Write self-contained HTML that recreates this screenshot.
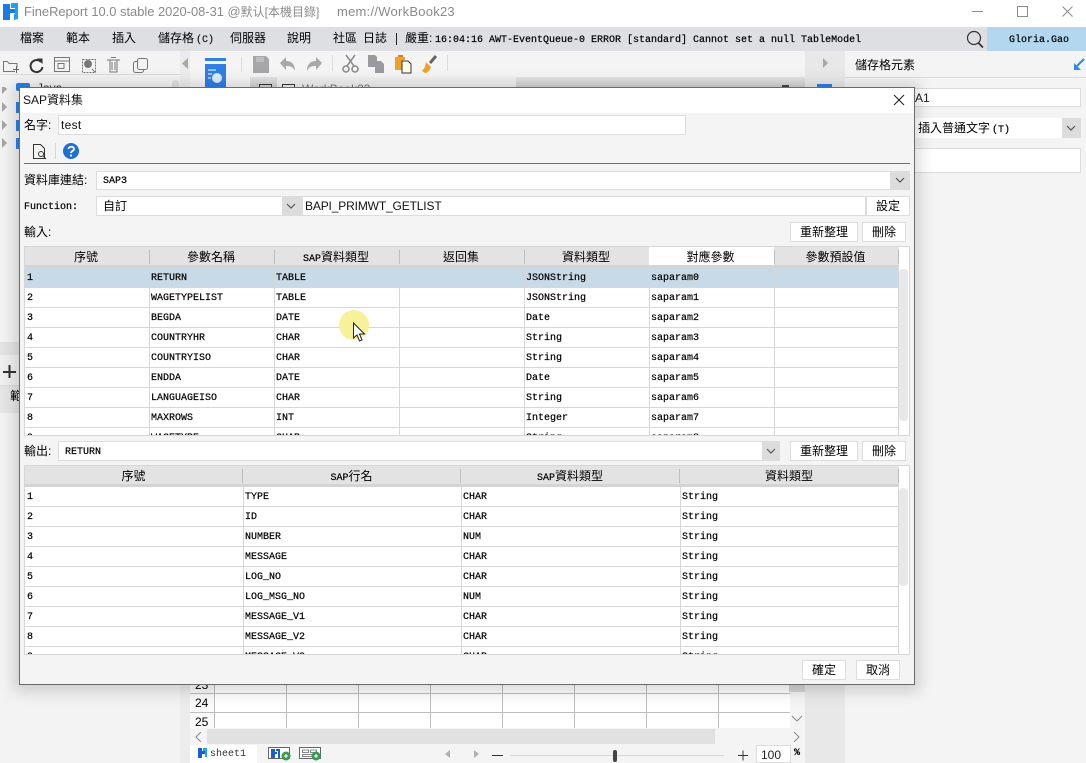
<!DOCTYPE html>
<html><head><meta charset="utf-8">
<style>
html,body{margin:0;padding:0;width:1086px;height:763px;overflow:hidden;background:#f3f3f3}
body{position:relative;font-family:"Liberation Sans","Noto Sans CJK TC",sans-serif;font-size:12px;color:#000}
.a{position:absolute;box-sizing:border-box}
.t{position:absolute;white-space:nowrap;line-height:16px}
.m{font-family:"Liberation Mono","Noto Sans CJK TC",monospace;font-size:10px;-webkit-text-stroke:.2px #000}
.in{position:absolute;box-sizing:border-box;background:#fff;border:1px solid #dcdcdc}
.btn{position:absolute;box-sizing:border-box;background:#fff;border:1px solid #dcdcdc;text-align:center;font-size:12px;line-height:18px}
.arr{position:absolute;box-sizing:border-box;background:#dcdcdc}
.hd{position:absolute;background:#e3e3e3;border-bottom:3px solid #d4d4d4;box-sizing:border-box;display:flex}
.hd div{box-sizing:border-box;text-align:center;line-height:18px;font-size:12px;border-right:1px solid #bdbdbd;height:14px;margin-top:3px;}
.hd div span{position:relative;top:-2px;left:-1px}
.hd.b div span{left:0}
table{border-collapse:separate;border-spacing:0;table-layout:fixed;font-family:"Liberation Mono",monospace;font-size:10px;background:#fff;-webkit-text-stroke:.2px #000}
td{height:20px;padding:2px 0 0 1px;border:0;border-right:1px solid #d6d6d6;border-bottom:1px solid #d6d6d6;white-space:nowrap;overflow:hidden;box-sizing:border-box;line-height:17px;vertical-align:top}
td:first-child{padding-left:2px}
tr.s td{background:#c8dae8}
.clip{position:absolute;overflow:hidden;background:#fff}
</style></head>
<body>
<!-- title bar -->
<div class="a" style="left:0;top:0;width:1086px;height:27px;background:#fff"></div>
<svg class="a" style="left:3px;top:3px" width="16" height="17" viewBox="0 0 16 17"><path d="M0 1h7v5h5v4H7v7H0z" fill="#1a7be0"/><path d="M8 0h7v16l-4 1V11h1V5H8z" fill="#1aa3f0"/></svg>
<div class="t" style="left:24px;top:4px;color:#8a8a8a;font-size:12.9px">FineReport 10.0 stable 2020-08-31 @<span style="font-size:12px">默认[本機目錄]</span></div>
<div class="t" style="left:337px;top:4px;color:#8a8a8a;font-size:13px;letter-spacing:.25px">mem://WorkBook23</div>
<div class="a" style="left:972px;top:11px;width:11px;height:1px;background:#8c8c8c"></div>
<div class="a" style="left:1017px;top:6px;width:11px;height:11px;border:1px solid #8c8c8c"></div>
<svg class="a" style="left:1062px;top:6px" width="12" height="12"><path d="M.5.5l10 10M10.500.5l-10 10" stroke="#8c8c8c" fill="none"/></svg>
<!-- menu -->
<div class="a" style="left:0;top:27px;width:1086px;height:24px;background:#dedfe2"></div>
<div class="t" style="left:20px;top:30px">檔案</div>
<div class="t" style="left:66px;top:30px">範本</div>
<div class="t" style="left:112px;top:30px">插入</div>
<div class="t" style="left:158px;top:30px">儲存格<span class="m" style="margin-left:2px;color:#223">(C)</span></div>
<div class="t" style="left:230px;top:30px">伺服器</div>
<div class="t" style="left:287px;top:30px">說明</div>
<div class="t" style="left:333px;top:30px">社區</div>
<div class="t" style="left:363px;top:30px">日誌</div>
<div class="a" style="left:396px;top:33px;width:1px;height:12px;background:#222"></div>
<div class="t" style="left:405px;top:30px">嚴重:</div>
<div class="t m" style="left:435px;top:33px">16:04:16 AWT-EventQueue-0 ERROR [standard] Cannot set a null TableModel</div>
<svg class="a" style="left:966px;top:29px" width="19" height="20" viewBox="0 0 19 20"><circle cx="8" cy="9" r="6.500" fill="none" stroke="#333" stroke-width="1.200"/><path d="M12.500 14l4.500 4.500" stroke="#333" stroke-width="1.800"/></svg>
<div class="a" style="left:987px;top:27px;width:99px;height:24px;background:#b3d7ef"></div>
<div class="t m" style="left:1009px;top:33px">Gloria.Gao</div>
<!-- left panel + toolbar -->
<div class="a" style="left:0;top:51px;width:180px;height:712px;background:#f3f3f3"></div>
<div class="a" style="left:0;top:74px;width:180px;height:1px;background:#dcdcdc"></div>
<div class="a" style="left:16px;top:83px;width:14px;height:8px;background:#2f7fe4;border-radius:2px"></div>
<div class="t" style="left:37px;top:80px;color:#333">Java</div>
<div class="a" style="left:172px;top:80px;width:7px;height:12px;background:#e0e0e0;border-radius:3px"></div>
<div class="a" style="left:0;top:342px;width:19px;height:13px;background:#e4e4e4"></div>
<div class="a" style="left:0;top:355px;width:19px;height:31px;background:#f0f0f0;border-bottom:1px solid #dcdcdc"></div>
<div class="a" style="left:0;top:386px;width:19px;height:27px;background:#e6e6e6"></div>
<div class="t" style="left:10px;top:388px">範</div>
<svg class="a" style="left:3px;top:365px" width="14" height="14"><path d="M0 7h13M6.500 0v13" stroke="#333" stroke-width="2"/></svg>
<svg class="a" style="left:0;top:55px" width="150" height="22" fill="none" stroke="#777">
<path d="M15 16.500H3.500V6.500h4l1.500 2h8v4" /><path d="M16.500 11v7M13 14.500h6" stroke="#666"/>
<path d="M41 7a6 6 0 1 0 1.500 5" stroke="#333" stroke-width="2"/><path d="M37 3.500l5.500 0 0 5.500z" fill="#333" stroke="none"/>
<rect x="54.500" y="2.500" width="15" height="14"/><path d="M55 6h14M58 8.500h6v5h-6z"/>
<path d="M82.500 4.500h13v13h-13z" stroke-dasharray="2 1"/><circle cx="88" cy="9" r="3.500" fill="#777"/><path d="M92 14l3 3"/>
<path d="M107 5h13M110 5v12h7V5M111 2.500h5M112 7v8M115 7v8"/>
<rect x="133.500" y="6.500" width="10" height="11" rx="2"/><rect x="137.500" y="3.500" width="10" height="11" rx="2" fill="#f3f3f3"/>
</svg>
<svg class="a" style="left:0;top:87px" width="19" height="70"><path d="M2 -3l5 5-5 5zM2 15l5 5-5 5zM2 33l5 5-5 5zM2 51l5 5-5 5z" fill="#a5a5a5"/><path d="M16 15h3v11h-3zM16 33h3v11h-3zM16 51h3v11h-3z" fill="#2f7fe4"/></svg>
<div class="a" style="left:180px;top:51px;width:10px;height:712px;background:#ececec"></div>
<svg class="a" style="left:182px;top:58px" width="7" height="12"><path d="M6 0v11L0 5.500z" fill="#a8a8a8"/></svg>
<!-- workbook area -->
<div class="a" style="left:190px;top:51px;width:615px;height:712px;background:#f4f4f4"></div>
<svg class="a" style="left:202px;top:57px" width="26" height="32"><rect x="3" y="1" width="21" height="3" fill="#2f7fe4"/><path d="M3 7h21v25H3z" fill="#2f7fe4"/><circle cx="15" cy="21" r="5" fill="#d9ecff"/><path d="M6 13h8M6 17h4M6 21h3" stroke="#fff"/></svg>
<div class="a" style="left:241px;top:57px;width:1px;height:15px;background:#dcdcdc"></div>
<svg class="a" style="left:250px;top:54px" width="190" height="20">
<path d="M3 2h13l3 3v14H3z" fill="#a6a6a8"/><path d="M6 3h8v5H6z" fill="#bdbdbf"/>
<path d="M30 9l6-6v4c7 0 9 5 9 10-2-4-4-5-9-5v4z" fill="#a8a8aa"/>
<path d="M72 9l-6-6v4c-7 0-9 5-9 10 2-4 4-5 9-5v4z" fill="#a8a8aa"/>
<g stroke="#8d8d90" stroke-width="1.600" fill="none"><circle cx="96" cy="15" r="3"/><circle cx="105" cy="15" r="3"/><path d="M97 12L105 1M104 12L96 1"/></g>
<path d="M118 1h7l2 2v4h4l3 3v9h-9v-6h-7z" fill="#9a9a9e"/>
<path d="M145 3h10v3h-2v10h-8z" fill="#eba22a"/><path d="M148 1h5v2h-5z" fill="#e07c20"/><path d="M152 7h6l3 3v9h-9z" fill="#fffde8" stroke="#333"/>
<path d="M176 8l5 5c-1 3-3 5-5 6-1 0-3-1-4-3 1 0 3-1 4-8z" fill="#eba22a"/><path d="M180 9l6-7" stroke="#666" stroke-width="3"/>
</svg>
<div class="a" style="left:447px;top:55px;width:1px;height:16px;background:#dcdcdc"></div>
<div class="a" style="left:332px;top:55px;width:1px;height:16px;background:#dcdcdc"></div>
<div class="a" style="left:250px;top:77px;width:555px;height:11px;background:linear-gradient(#e4e4e4,#cfcfcf)"></div>
<div class="a" style="left:277px;top:77px;width:239px;height:11px;background:#f0f0f0"></div>
<div class="a" style="left:259px;top:84px;width:13px;height:4px;border:1px solid #333;border-bottom:0"></div>
<div class="a" style="left:282px;top:84px;width:13px;height:4px;border:1px solid #333;border-bottom:0"></div>
<div class="t" style="left:302px;top:81px;color:#777">WorkBook23</div>
<div class="a" style="left:782px;top:85px;width:7px;height:3px;background:#444"></div>
<!-- sheet grid -->
<div class="a" style="left:190px;top:684px;width:25px;height:45px;background:#fafafa"></div>
<div class="a" style="left:215px;top:684px;width:575px;height:45px;background:#fff"></div>
<div class="a" style="left:190px;top:693px;width:600px;height:1px;background:#bdbdbd"></div>
<div class="a" style="left:190px;top:712px;width:600px;height:1px;background:#bdbdbd"></div>
<div class="a" style="left:214px;top:684px;width:1px;height:45px;background:#bdbdbd"></div>
<div class="a" style="left:286px;top:684px;width:1px;height:45px;background:#bdbdbd"></div>
<div class="a" style="left:358px;top:684px;width:1px;height:45px;background:#bdbdbd"></div>
<div class="a" style="left:430px;top:684px;width:1px;height:45px;background:#bdbdbd"></div>
<div class="a" style="left:502px;top:684px;width:1px;height:45px;background:#bdbdbd"></div>
<div class="a" style="left:574px;top:684px;width:1px;height:45px;background:#bdbdbd"></div>
<div class="a" style="left:646px;top:684px;width:1px;height:45px;background:#bdbdbd"></div>
<div class="a" style="left:718px;top:684px;width:1px;height:45px;background:#bdbdbd"></div>
<div class="t" style="left:195px;top:677px">23</div>
<div class="t" style="left:195px;top:695px">24</div>
<div class="t" style="left:195px;top:714px">25</div>
<div class="a" style="left:789px;top:684px;width:16px;height:8px;background:#d4d4d4"></div>
<svg class="a" style="left:791px;top:715px" width="12" height="8"><path d="M1 1l5 5 5-5" stroke="#888" fill="none"/></svg>
<div class="a" style="left:190px;top:728px;width:615px;height:16px;background:#f4f4f4"></div>
<div class="a" style="left:207px;top:729px;width:508px;height:15px;background:#e1e1e1"></div>
<svg class="a" style="left:195px;top:732px" width="8" height="10"><path d="M6 0L1 5l5 5" stroke="#888" fill="none"/></svg>
<svg class="a" style="left:793px;top:732px" width="8" height="10"><path d="M1 0l5 5-5 5" stroke="#888" fill="none"/></svg>
<div class="a" style="left:190px;top:745px;width:67px;height:18px;background:#fff"></div>
<svg class="a" style="left:198px;top:748px" width="9" height="10"><path d="M0 0h4v3h3v3H4v4H0z" fill="#1a5fd0"/><path d="M5 0h4v9H7V3H5z" fill="#1aa3f0"/></svg>
<div class="t m" style="left:210px;top:747px;color:#333;-webkit-text-stroke:0">sheet1</div>
<svg class="a" style="left:268px;top:746px" width="60" height="16"><rect x=".5" y="1.500" width="21" height="11" fill="#fff" stroke="#666"/><path d="M3 3h4v3h2v2H7v4H3zM8 3h4v9h-2V5H8z" fill="#1a5fd0"/><circle cx="18" cy="10" r="4.500" fill="#3a9a55"/><path d="M16 10h4M18 8v4" stroke="#fff"/>
<rect x="31.500" y="1.500" width="21" height="11" fill="#fff" stroke="#666"/><path d="M34.500 4h6v2.500h-6zM42.500 4h6v2.500h-6zM34.500 8.500h14v2h-14z" fill="none" stroke="#666" stroke-width=".8"/><circle cx="48" cy="10" r="4.500" fill="#3a9a55"/><path d="M46 10h4M48 8v4" stroke="#fff"/></svg>
<svg class="a" style="left:444px;top:750px" width="50" height="9"><path d="M6 0v8L1 4zM30 0v8l5-4z" fill="#b0b0b0"/></svg>
<div class="a" style="left:492px;top:755px;width:11px;height:1px;background:#333"></div>
<div class="a" style="left:510px;top:755px;width:214px;height:1px;background:#d6d6d6"></div>
<div class="a" style="left:613px;top:750px;width:4px;height:12px;background:#444;border-radius:2px"></div>
<svg class="a" style="left:738px;top:750px" width="11" height="11"><path d="M0 5.500h10M5 .5v10" stroke="#333"/></svg>
<div class="a" style="left:756px;top:745px;width:35px;height:18px;background:#fff;border:1px solid #dcdcdc"></div>
<div class="t" style="left:761px;top:747px;color:#222">100</div>
<div class="t m" style="left:794px;top:746px;font-weight:bold">%</div>
<!-- right strip + panel -->
<div class="a" style="left:805px;top:51px;width:40px;height:712px;background:#e8e8e8"></div>
<svg class="a" style="left:823px;top:58px" width="6" height="11"><path d="M0 0v10l5-5z" fill="#a8a8a8"/></svg>
<div class="a" style="left:817px;top:84px;width:15px;height:4px;background:#2f7fe4"></div>
<div class="a" style="left:845px;top:51px;width:241px;height:712px;background:#f4f4f4"></div>
<div class="a" style="left:845px;top:77px;width:241px;height:1px;background:#dcdcdc"></div>
<div class="t" style="left:855px;top:57px">儲存格元素</div>
<svg class="a" style="left:1073px;top:58px" width="12" height="13"><path d="M11 1L3 9" stroke="#2f8be0" stroke-width="2"/><path d="M1 5v7h7z" fill="#2f8be0"/></svg>
<div class="in" style="left:880px;top:88px;width:201px;height:19px"></div>
<div class="t" style="left:915px;top:90px;color:#222">A1</div>
<div class="in" style="left:880px;top:118px;width:201px;height:20px;background:#fff;border:0"></div>
<div class="arr" style="left:1062px;top:118px;width:19px;height:20px"></div>
<svg class="a" style="left:1066px;top:125px" width="11" height="7"><path d="M1 1l4 4 4-4" stroke="#555" fill="none" stroke-width="1.200"/></svg>
<div class="t" style="left:918px;top:120px">插入普通文字<span class="m" style="margin-left:2px">(T)</span></div>
<div class="in" style="left:880px;top:148px;width:201px;height:25px"></div>
<!-- dialog -->
<div class="a" style="left:19px;top:87px;width:896px;height:598px;background:#f4f4f4;border:1px solid #6b6b6b;box-shadow:0 2px 14px 5px rgba(0,0,0,.15)">
</div>
<div class="a" style="left:20px;top:88px;width:894px;height:25px;background:#fff"></div>
<div class="t" style="left:23px;top:92px;color:#111">SAP資料集</div>
<svg class="a" style="left:893px;top:94px" width="12" height="12"><path d="M1 1l10 10M11 1L1 11" stroke="#222" stroke-width="1.100" fill="none"/></svg>

<div class="t" style="left:24px;top:117px">名字:</div>
<div class="in" style="left:58px;top:115px;width:628px;height:20px"></div>
<div class="t" style="left:61px;top:117px;color:#111;letter-spacing:.3px">test</div>

<svg class="a" style="left:32px;top:143px" width="16" height="18" fill="none" stroke="#333"><path d="M1.500 1.500h7l4 4v10h-11z"/><circle cx="9" cy="11" r="2.500"/><path d="M11 13l3 3"/></svg>
<div class="a" style="left:55px;top:143px;width:1px;height:16px;background:#d6d6d6"></div>
<svg class="a" style="left:63px;top:143px" width="16" height="16"><circle cx="8" cy="8" r="8" fill="#2070d0"/><path d="M5.500 6c0-3 5.500-3 5.500 0 0 2-3 2-3 4" stroke="#fff" stroke-width="1.800" fill="none"/><circle cx="8" cy="12.500" r="1.100" fill="#fff"/></svg>
<div class="a" style="left:24px;top:163px;width:886px;height:1px;background:#6e6e6e"></div>

<div class="t" style="left:24px;top:172px">資料庫連結:</div>
<div class="in" style="left:96px;top:171px;width:814px;height:19px"></div>
<div class="arr" style="left:890px;top:171px;width:20px;height:19px"></div>
<svg class="a" style="left:895px;top:177px" width="11" height="7"><path d="M1 1l4 4 4-4" stroke="#555" fill="none" stroke-width="1.200"/></svg>
<div class="t m" style="left:103px;top:174px">SAP3</div>

<div class="t m" style="left:24px;top:200px">Function:</div>
<div class="in" style="left:96px;top:196px;width:206px;height:20px"></div>
<div class="t" style="left:103px;top:198px">自訂</div>
<div class="arr" style="left:282px;top:197px;width:20px;height:18px"></div>
<svg class="a" style="left:286px;top:203px" width="11" height="7"><path d="M1 1l4 4 4-4" stroke="#555" fill="none" stroke-width="1.200"/></svg>
<div class="in" style="left:302px;top:196px;width:564px;height:20px"></div>
<div class="t" style="left:305px;top:198px;color:#111;letter-spacing:-.15px">BAPI_PRIMWT_GETLIST</div>
<div class="btn" style="left:866px;top:196px;width:44px;height:20px">設定</div>

<div class="t" style="left:24px;top:224px">輸入:</div>
<div class="btn" style="left:790px;top:222px;width:68px;height:20px">重新整理</div>
<div class="btn" style="left:862px;top:222px;width:44px;height:20px">刪除</div>

<!-- table 1 -->
<div class="a" style="left:24px;top:246px;width:886px;height:190px;background:#fff;border:1px solid #d6d6d6"></div>
<div class="hd" style="left:25px;top:247px;width:874px;height:21px">
<div style="width:125px"><span>序號</span></div><div style="width:125px"><span>參數名稱</span></div><div style="width:125px"><span><span class="m" style="top:0;left:0">SAP</span>資料類型</span></div><div style="width:125px"><span>返回集</span></div><div style="width:125px"><span>資料類型</span></div><div style="width:125px"><span>對應參數</span></div><div style="width:124px"><span>參數預設值</span></div>
</div>
<div class="a" style="left:649px;top:247px;width:125px;height:18px;background:#fff;text-align:center;line-height:20px;padding-right:2px">對應參數</div>
<div class="clip" style="left:25px;top:268px;width:874px;height:167px">
<table style="width:874px"><colgroup><col style="width:125px"><col style="width:125px"><col style="width:125px"><col style="width:125px"><col style="width:125px"><col style="width:125px"><col style="width:124px"></colgroup>
<tr class="s"><td>1</td><td>RETURN</td><td>TABLE</td><td></td><td>JSONString</td><td>saparam0</td><td></td></tr>
<tr><td>2</td><td>WAGETYPELIST</td><td>TABLE</td><td></td><td>JSONString</td><td>saparam1</td><td></td></tr>
<tr><td>3</td><td>BEGDA</td><td>DATE</td><td></td><td>Date</td><td>saparam2</td><td></td></tr>
<tr><td>4</td><td>COUNTRYHR</td><td>CHAR</td><td></td><td>String</td><td>saparam3</td><td></td></tr>
<tr><td>5</td><td>COUNTRYISO</td><td>CHAR</td><td></td><td>String</td><td>saparam4</td><td></td></tr>
<tr><td>6</td><td>ENDDA</td><td>DATE</td><td></td><td>Date</td><td>saparam5</td><td></td></tr>
<tr><td>7</td><td>LANGUAGEISO</td><td>CHAR</td><td></td><td>String</td><td>saparam6</td><td></td></tr>
<tr><td>8</td><td>MAXROWS</td><td>INT</td><td></td><td>Integer</td><td>saparam7</td><td></td></tr>
<tr><td>9</td><td>WAGETYPE</td><td>CHAR</td><td></td><td>String</td><td>saparam8</td><td></td></tr>
</table></div>
<div class="a" style="left:899px;top:269px;width:9px;height:152px;background:#e8e8e8;border-radius:4px"></div>
<!-- highlight + cursor -->
<div class="a" style="left:339px;top:310px;width:30px;height:30px;border-radius:50%;background:#f6f29a"></div>
<svg class="a" style="left:352px;top:322px" width="14" height="21"><path d="M1.500 1v15l3.500-3 2.500 6 2.500-1-2.500-6h5z" fill="#fff" stroke="#222"/></svg>

<!-- output -->
<div class="t" style="left:24px;top:443px">輸出:</div>
<div class="in" style="left:58px;top:441px;width:722px;height:20px"></div>
<div class="t m" style="left:65px;top:445px">RETURN</div>
<div class="arr" style="left:762px;top:442px;width:18px;height:18px"></div>
<svg class="a" style="left:766px;top:448px" width="11" height="7"><path d="M1 1l4 4 4-4" stroke="#555" fill="none" stroke-width="1.200"/></svg>
<div class="btn" style="left:790px;top:441px;width:68px;height:20px">重新整理</div>
<div class="btn" style="left:862px;top:441px;width:44px;height:20px">刪除</div>

<!-- table 2 -->
<div class="a" style="left:24px;top:465px;width:886px;height:190px;background:#fff;border:1px solid #d6d6d6"></div>
<div class="hd b" style="left:25px;top:466px;width:874px;height:21px">
<div style="width:218px"><span>序號</span></div><div style="width:218px"><span><span class="m" style="top:0;left:0">SAP</span>行名</span></div><div style="width:219px"><span><span class="m" style="top:0;left:0">SAP</span>資料類型</span></div><div style="width:219px"><span>資料類型</span></div>
</div>
<div class="clip" style="left:25px;top:487px;width:874px;height:167px">
<table style="width:874px"><colgroup><col style="width:219px"><col style="width:218px"><col style="width:219px"><col style="width:218px"></colgroup>
<tr><td>1</td><td>TYPE</td><td>CHAR</td><td>String</td></tr>
<tr><td>2</td><td>ID</td><td>CHAR</td><td>String</td></tr>
<tr><td>3</td><td>NUMBER</td><td>NUM</td><td>String</td></tr>
<tr><td>4</td><td>MESSAGE</td><td>CHAR</td><td>String</td></tr>
<tr><td>5</td><td>LOG_NO</td><td>CHAR</td><td>String</td></tr>
<tr><td>6</td><td>LOG_MSG_NO</td><td>NUM</td><td>String</td></tr>
<tr><td>7</td><td>MESSAGE_V1</td><td>CHAR</td><td>String</td></tr>
<tr><td>8</td><td>MESSAGE_V2</td><td>CHAR</td><td>String</td></tr>
<tr><td>9</td><td>MESSAGE_V3</td><td>CHAR</td><td>String</td></tr>
</table></div>
<div class="a" style="left:899px;top:488px;width:9px;height:98px;background:#e8e8e8;border-radius:4px"></div>

<div class="btn" style="left:802px;top:660px;width:44px;height:20px">確定</div>
<div class="btn" style="left:856px;top:660px;width:44px;height:20px">取消</div>
</body></html>
